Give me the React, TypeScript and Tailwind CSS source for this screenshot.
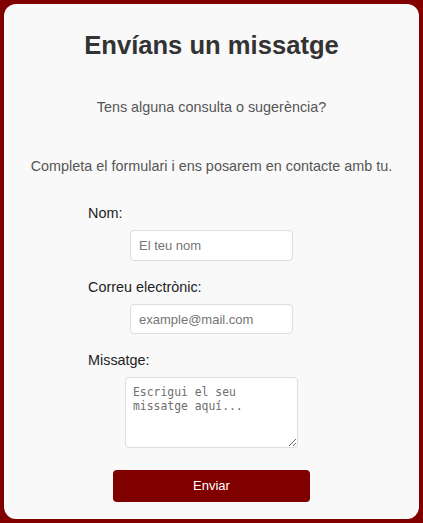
export default function App() {
  return (
    <div className="h-[523px] w-full bg-[#800000] p-1" style={{ fontFamily: '"Liberation Sans", Arial, sans-serif' }}>
      <div className="h-full rounded-[12px] bg-[#f9f9f9] text-center">
        <h1 className="pt-[26px] text-[25.6px] leading-[30px] font-bold text-[#333]">Envíans un missatge</h1>
        <p className="mt-[37px] text-[14.4px] leading-[20px] text-[#555]">Tens alguna consulta o sugerència?</p>
        <p className="mt-[39px] text-[14.4px] leading-[20px] text-[#555]">
          Completa el formulari i ens posarem en contacte amb tu.
        </p>

        <form className="mt-[27px] flex flex-col items-center" onSubmit={e => e.preventDefault()}>
          <label className="w-[247px] text-left text-[14.4px] leading-[20px] text-[#222]">Nom:</label>
          <input
            type="text"
            placeholder="El teu nom"
            className="mt-[7px] h-[31px] w-[163px] rounded-[4px] border border-[#ddd] bg-white px-2 text-[13px] text-[#333] placeholder:text-[#757575] outline-none"
          />

          <label className="mt-4 w-[247px] text-left text-[14.4px] leading-[20px] text-[#222]">Correu electrònic:</label>
          <input
            type="email"
            placeholder="example@mail.com"
            className="mt-[7px] h-[30px] w-[163px] rounded-[4px] border border-[#ddd] bg-white px-2 text-[13px] text-[#333] placeholder:text-[#757575] outline-none"
          />

          <label className="mt-4 w-[247px] text-left text-[14.4px] leading-[20px] text-[#222]">Missatge:</label>
          <textarea
            placeholder="Escrigui el seu missatge aquí..."
            className="mt-[7px] h-[71px] w-[173px] rounded-[4px] border border-[#ddd] bg-white px-[7px] pt-[7px] text-[11.4px] leading-[14px] text-[#333] placeholder:text-[#6f6f6f] outline-none"
            style={{ fontFamily: '"DejaVu Sans Mono", monospace' }}
          />

          <button
            type="submit"
            className="mt-[22px] h-[32px] w-[197px] rounded-[4px] bg-[#800000] text-[13px] text-white"
          >
            Enviar
          </button>
        </form>
      </div>
    </div>
  )
}
